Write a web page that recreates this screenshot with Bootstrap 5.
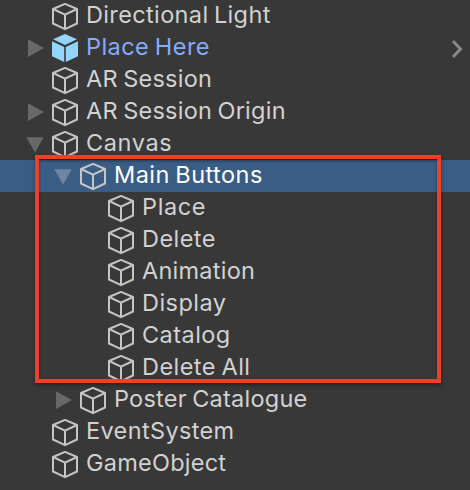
<!DOCTYPE html>
<html lang="en">
<head>
<meta charset="utf-8">
<meta name="viewport" content="width=device-width, initial-scale=1">
<title>Hierarchy</title>
<link href="https://cdn.jsdelivr.net/npm/bootstrap@5.3.0/dist/css/bootstrap.min.css" rel="stylesheet">
<style>
  body { background: #383838; color: #d2d2d2; font-family: Inter, "Liberation Sans", sans-serif; font-size: 23.5px; font-weight: 370; letter-spacing: .45px; word-spacing: -1.5px; }
  .tree { height: 490px; }
  .tree-item { height: 32px; line-height: 30px; padding-left: 26px; padding-right: 7px; white-space: nowrap; }
  .depth-2 { padding-left: 54px; }
  .depth-3 { padding-left: 82px; }
  .is-selected { background: #3a5d85; color: #fff; }
  .is-prefab { color: #86abf8; }
  .track-tight { letter-spacing: .24px; }
  .track-snug { letter-spacing: .36px; }
  .track-wide { letter-spacing: .62px; }
  .fold { width: 26px; height: 32px; fill: #686868; }
  .is-selected .fold { fill: #6f87a2; }
  .cube { width: 26px; height: 32px; margin-right: 8px; fill: none; stroke: #c6c6c6; stroke-width: 2; stroke-linejoin: round; }
  .is-prefab .cube { fill: #93d5fb; stroke: none; }
  .chevron { width: 12px; height: 32px; fill: none; stroke: #888; stroke-width: 3; }
  .highlight-frame { left: 35px; top: 155px; width: 406px; height: 228px; border: 4px solid #ec4126; box-shadow: 0 2px 4px rgba(0,0,0,.4), inset 0 2px 3px rgba(0,0,0,.4); }
</style>
</head>
<body>
<svg class="d-none">
  <symbol id="cube" viewBox="0 0 26 32"><path d="M13 3.8 25 9v14.5L13 29.2 1 23.5V9zM1 9l12 5.7L25 9M13 14.7v14.5"/></symbol>
  <symbol id="prefab" viewBox="0 0 26 32"><path d="M13 2 25 7.3 13 13 1 7.3zM0 9.2 12.2 15v15L0 24.3zM26 9.2 13.8 15v15L26 24.3z"/></symbol>
  <symbol id="closed" viewBox="0 0 26 32"><path d="M2 7.2 18 16 2 25z"/></symbol>
  <symbol id="open" viewBox="0 0 26 32"><path d="M.3 9.2h17.4L9 24.6z"/></symbol>
</svg>
<main class="tree position-relative overflow-hidden">
  <ul class="list-unstyled m-0">
    <li class="tree-item d-flex track-snug"><svg class="fold"></svg><svg class="cube"><use href="#cube"/></svg><span>Directional Light</span></li>
    <li class="tree-item d-flex is-prefab"><svg class="fold"><use href="#closed"/></svg><svg class="cube"><use href="#prefab"/></svg><span>Place Here</span><svg class="chevron ms-auto" viewBox="0 0 12 32"><path d="m2 9 7.5 8L2 25"/></svg></li>
    <li class="tree-item d-flex track-tight"><svg class="fold"></svg><svg class="cube"><use href="#cube"/></svg><span>AR Session</span></li>
    <li class="tree-item d-flex track-tight"><svg class="fold"><use href="#closed"/></svg><svg class="cube"><use href="#cube"/></svg><span>AR Session Origin</span></li>
    <li class="tree-item d-flex track-wide"><svg class="fold"><use href="#open"/></svg><svg class="cube"><use href="#cube"/></svg><span>Canvas</span></li>
    <li class="tree-item d-flex depth-2 is-selected"><svg class="fold"><use href="#open"/></svg><svg class="cube"><use href="#cube"/></svg><span>Main Buttons</span></li>
    <li class="tree-item d-flex depth-3 track-wide"><svg class="fold"></svg><svg class="cube"><use href="#cube"/></svg><span>Place</span></li>
    <li class="tree-item d-flex depth-3"><svg class="fold"></svg><svg class="cube"><use href="#cube"/></svg><span>Delete</span></li>
    <li class="tree-item d-flex depth-3 track-tight"><svg class="fold"></svg><svg class="cube"><use href="#cube"/></svg><span>Animation</span></li>
    <li class="tree-item d-flex depth-3"><svg class="fold"></svg><svg class="cube"><use href="#cube"/></svg><span>Display</span></li>
    <li class="tree-item d-flex depth-3"><svg class="fold"></svg><svg class="cube"><use href="#cube"/></svg><span>Catalog</span></li>
    <li class="tree-item d-flex depth-3"><svg class="fold"></svg><svg class="cube"><use href="#cube"/></svg><span>Delete All</span></li>
    <li class="tree-item d-flex depth-2 track-tight"><svg class="fold"><use href="#closed"/></svg><svg class="cube"><use href="#cube"/></svg><span>Poster Catalogue</span></li>
    <li class="tree-item d-flex track-snug"><svg class="fold"></svg><svg class="cube"><use href="#cube"/></svg><span>EventSystem</span></li>
    <li class="tree-item d-flex track-tight"><svg class="fold"></svg><svg class="cube"><use href="#cube"/></svg><span>GameObject</span></li>
  </ul>
  <div class="highlight-frame position-absolute"></div>
</main>
<script src="https://cdn.jsdelivr.net/npm/bootstrap@5.3.0/dist/js/bootstrap.bundle.min.js"></script>
</body>
</html>
